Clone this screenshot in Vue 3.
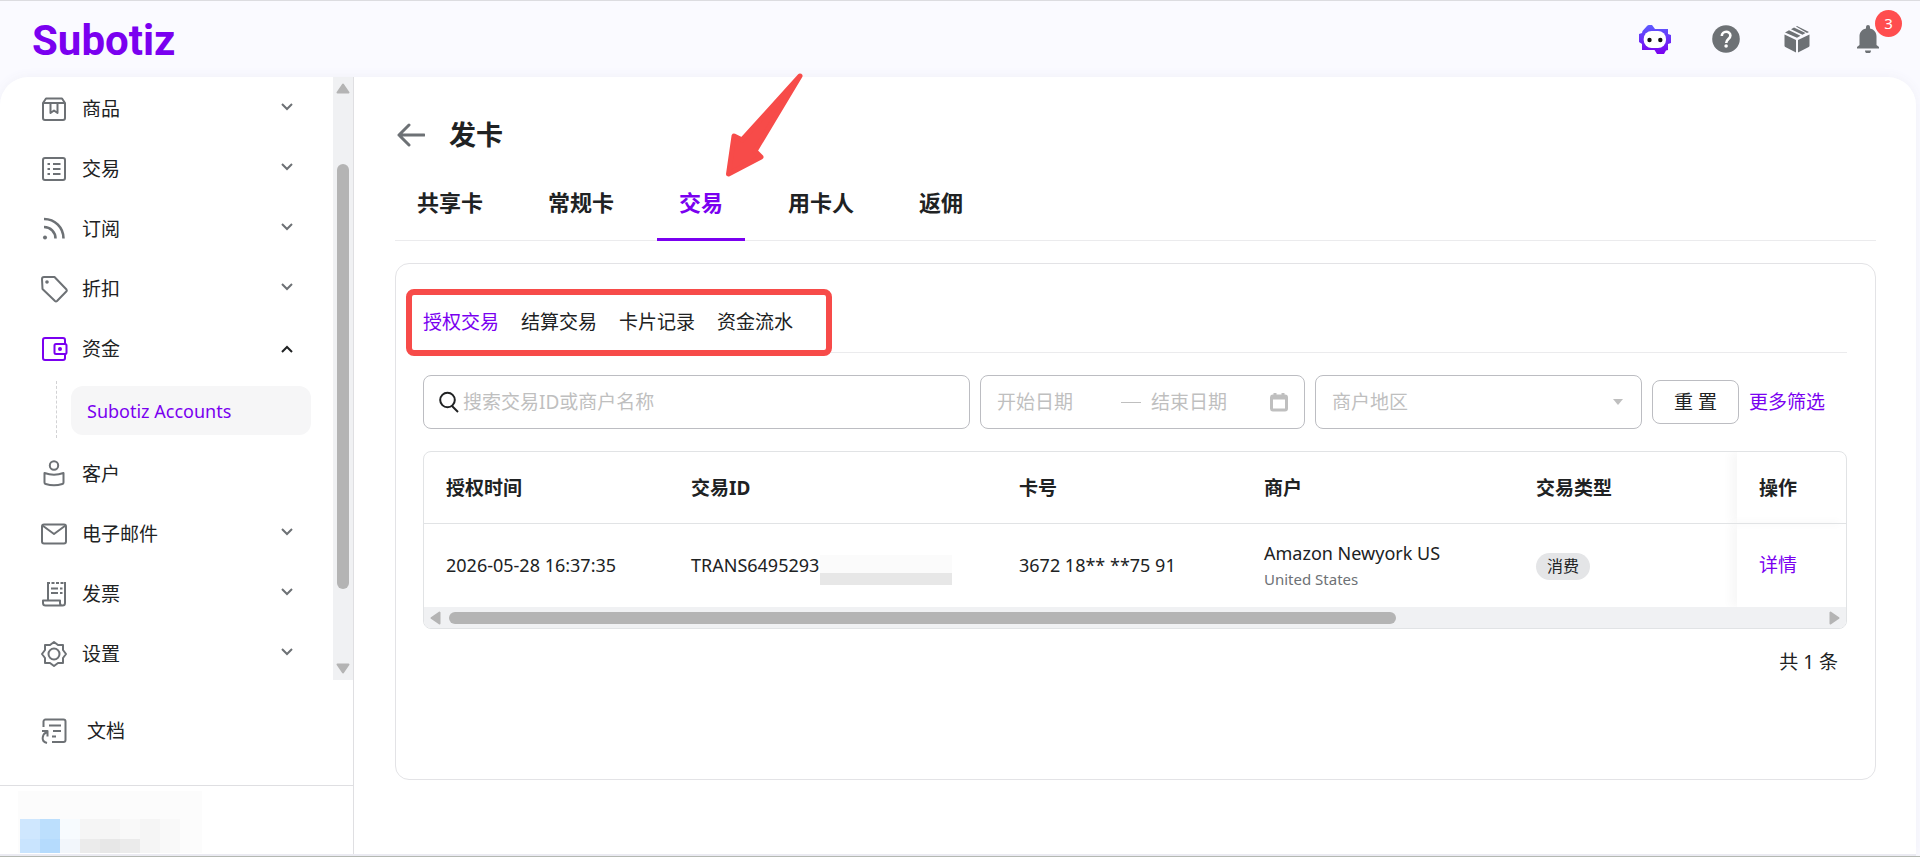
<script setup>
import { ref } from 'vue'

const menuTop = [
  { label: '商品', icon: 'goods', chevron: 'down' },
  { label: '交易', icon: 'trade', chevron: 'down' },
  { label: '订阅', icon: 'feed', chevron: 'down' },
  { label: '折扣', icon: 'tag', chevron: 'down' },
  { label: '资金', icon: 'wallet', chevron: 'up' }
]
const menuBottom = [
  { label: '客户', icon: 'customer', chevron: '' },
  { label: '电子邮件', icon: 'mail', chevron: 'down' },
  { label: '发票', icon: 'invoice', chevron: 'down' },
  { label: '设置', icon: 'gear', chevron: 'down' }
]
const icons = {
  goods: '<path d="M2 7v15a2 2 0 0 0 2 2h18a2 2 0 0 0 2-2V7l-3-4.500H5zM2 7h22"/><path d="M9.500 7v10l3.500-2.500 3.500 2.500V7"/>',
  trade: '<rect x="2" y="2" width="22" height="22" rx="2"/><path d="M12 8h7.500M12 13h7.500M12 18h7.500M6.500 8h2.500M6.500 13h2.500M6.500 18h2.500"/>',
  feed: '<path stroke-width="2.600" d="M3 3c11 0 19.500 8.500 19.500 19.500M3 11c6.500 0 11.500 5 11.500 11.500"/><circle cx="4" cy="21.500" r="2" fill="currentColor" stroke="none"/>',
  tag: '<path d="M1 3a2 2 0 0 1 2-2h10.500L25.500 13.500a1.500 1.500 0 0 1 0 1.800L16 25a1.500 1.500 0 0 1-2 0L1.500 13z"/><circle cx="6" cy="6" r="1.800" fill="currentColor" stroke="none"/>',
  wallet: '<path d="M24 8V4a2 2 0 0 0-2-2H4a2 2 0 0 0-2 2v18a2 2 0 0 0 2 2h18a2 2 0 0 0 2-2v-4"/><rect x="13.500" y="8" width="12" height="10" rx="1.500"/><circle cx="19" cy="13" r="2" fill="currentColor" stroke="none"/>',
  customer: '<circle cx="13" cy="4.500" r="4.200"/><path d="M3.500 12q9.500 3.500 19 0v9.500a1.500 1.500 0 0 1-1.200 1.500q-8.300 2.500-16.600 0a1.500 1.500 0 0 1-1.200-1.500z"/>',
  mail: '<rect x="1" y="3.500" width="24" height="19" rx="2"/><path d="M1.500 4.500L13 13l11.500-8.500"/>',
  invoice: '<path d="M7 19V1M24 1v21a2.500 2.500 0 0 1-2.500 2.500H4.500A2.500 2.500 0 0 1 2 22v-2.500h17V22a2.500 2.500 0 0 0 2.500 2.500"/><path d="M10 7.500h7M10 12h7M19 7.500h2.500M19 12h2.500"/><path d="M6 2h18" stroke-dasharray="3 1.500"/>',
  gear: '<path d="M13 1l4 3h5v5l3 4-3 4v5h-5l-4 3-4-3H4v-5l-3-4 3-4V4h5z"/><circle cx="13" cy="13" r="5.500"/>',
  docs: '<path d="M2.500 9V3.500a2 2 0 0 1 2-2h18a2 2 0 0 1 2 2V22a2 2 0 0 1-2 2H11"/><path d="M8 7.500h12M12 13h8M11 18.500h4"/><path d="M1 13h5.500v5.500M6.500 13.500C2 15.500-1.500 23 6 25"/>'
}
const tabs = ['共享卡', '常规卡', '交易', '用卡人', '返佣']
const subTabs = ['授权交易', '结算交易', '卡片记录', '资金流水']
const tab = ref('交易')
const subTab = ref('授权交易')
const region = ref('')
</script>

<template>
  <div class="page">
    <header class="topbar">
      <a class="logo" href="#">Subotiz</a>
      <div class="tools">
        <button class="tool" aria-label="助手">
          <svg width="32" height="29" viewBox="0 0 32 29">
            <defs>
              <linearGradient id="bot" x1="0" y1="0" x2="0" y2="1">
                <stop offset="0" stop-color="#5c5cff" /><stop offset="1" stop-color="#7a00f0" />
              </linearGradient>
            </defs>
            <path fill="url(#bot)" d="M3.500 6 8 1a3 3 0 0 1 2-1h3l3 4h13v5l3 1v8l-3 1v6l-2 .5-2 3.500h-7L15.500 25H3v-6l-3-2V9l3-1z" />
            <rect x="4.700" y="6" width="22.300" height="17" rx="8" fill="#fff" />
            <circle cx="10.500" cy="15" r="2.200" fill="#111" /><circle cx="21.300" cy="15" r="2.200" fill="#111" />
          </svg>
        </button>
        <button class="tool" aria-label="帮助">
          <svg width="28" height="28" viewBox="0 0 28 28">
            <circle cx="14" cy="14" r="13.800" fill="#6d7175" />
            <path d="M9.800 11c0-5.500 8.600-5.500 8.600-.5 0 3.500-4.200 3.500-4.200 7.500" fill="none" stroke="#fff" stroke-width="2.600" />
            <circle cx="14.100" cy="21" r="1.800" fill="#fff" />
          </svg>
        </button>
        <button class="tool" aria-label="产品">
          <svg width="28" height="28" viewBox="0 0 28 28" fill="#6d7175">
            <path d="M1.500 9.500 13 15v12.500L2.300 22a1.500 1.500 0 0 1-.8-1.300zM26.500 9.500 15 15v12.500L25.700 22a1.500 1.500 0 0 0 .8-1.300z" />
            <path d="M2 7.500 6 5.300l11.500 5.500L14 12.800zM8 4.200l3-1.700 11.500 5.600-3 1.700zM13 1.500 14 1l12 6-2 1z" />
          </svg>
        </button>
        <button class="tool bell" aria-label="通知">
          <svg width="24" height="28" viewBox="0 0 24 28" fill="#6d7175">
            <path d="M10 3.500V2a2 2 0 0 1 4 0v1.500c4.500 1 6.500 4 6.500 8V20l2.500 2v1.500H1V22l2.500-2v-8.500c0-4 2-7 6.500-8zM9 25.500h6a3 3 0 0 1-6 0z" />
          </svg>
          <span class="badge">3</span>
        </button>
      </div>
    </header>

    <div class="panel">
      <aside class="sidebar">
        <div class="scroller">
          <nav class="menu">
            <a v-for="m in menuTop" :key="m.label" href="#" class="item" :class="{ open: m.chevron === 'up' }">
              <svg class="icon" viewBox="0 0 26 26" v-html="icons[m.icon]" />
              <span class="label">{{ m.label }}</span>
              <svg class="chev" viewBox="0 0 12 8"><path :d="m.chevron === 'up' ? 'M1 7l5-5 5 5' : 'M1 1l5 5 5-5'" /></svg>
            </a>
            <div class="children"><a href="#" class="child">Subotiz Accounts</a></div>
            <a v-for="m in menuBottom" :key="m.label" href="#" class="item">
              <svg class="icon" viewBox="0 0 26 26" v-html="icons[m.icon]" />
              <span class="label">{{ m.label }}</span>
              <svg v-if="m.chevron" class="chev" viewBox="0 0 12 8"><path d="M1 1l5 5 5-5" /></svg>
            </a>
          </nav>
          <div class="vbar">
            <svg width="14" height="11" viewBox="0 0 14 11"><path d="M7 1.500 12.500 9.500h-11z" /></svg>
            <div class="vtrack"><div class="vthumb"></div></div>
            <svg width="14" height="11" viewBox="0 0 14 11"><path d="M7 9.500 12.500 1.500h-11z" /></svg>
          </div>
        </div>
        <a href="#" class="item docs">
          <svg class="icon" viewBox="0 0 26 26" v-html="icons.docs" />
          <span class="label">文档</span>
        </a>
        <div class="profile">
          <div class="mosaic">
            <i class="b1"></i><i class="b2"></i><i class="b3"></i><i class="b4"></i><i class="b4"></i><i class="b5"></i><i class="b4"></i><i class="b5"></i><i></i>
            <i class="c1"></i><i class="c2"></i><i class="c3"></i><i class="c4"></i><i class="c5"></i><i class="c4"></i><i class="b4"></i><i class="b5"></i><i></i>
          </div>
        </div>
      </aside>

      <main class="main">
        <div class="title">
          <button class="back" aria-label="返回">
            <svg width="28" height="26" viewBox="0 0 28 26"><path d="M12 3 2 13l10 10M2 13h25" /></svg>
          </button>
          <h1>发卡</h1>
        </div>
        <div class="tabs" role="tablist">
          <button v-for="t in tabs" :key="t" role="tab" :aria-selected="tab === t" :class="{ on: tab === t }" @click="tab = t">{{ t }}</button>
        </div>

        <section class="card">
          <div class="subtabs" role="tablist">
            <button v-for="t in subTabs" :key="t" role="tab" :aria-selected="subTab === t" :class="{ on: subTab === t }" @click="subTab = t">{{ t }}</button>
            <div class="marker"></div>
          </div>

          <div class="filters">
            <label class="field search">
              <svg width="20" height="22" viewBox="0 0 20 22"><circle cx="8.500" cy="9" r="7.300" /><path d="M13 15l6 6" /></svg>
              <input type="text" aria-label="搜索" placeholder="搜索交易ID或商户名称" />
            </label>
            <div class="field dates">
              <input type="text" aria-label="开始日期" placeholder="开始日期" />
              <span class="dash"></span>
              <input type="text" aria-label="结束日期" placeholder="结束日期" />
              <svg width="18" height="20" viewBox="0 0 18 20"><rect x="1.500" y="4" width="15" height="14" rx="1.500" /><path d="M1.500 6h15M5 1v4M13 1v4" /></svg>
            </div>
            <div class="field region">
              <select v-model="region" aria-label="商户地区"><option value="">商户地区</option></select>
              <svg width="10" height="6" viewBox="0 0 10 6"><path d="M0 0h10L5 6z" /></svg>
            </div>
            <button class="reset">重 置</button>
            <a href="#" class="more">更多筛选</a>
          </div>

          <div class="tablebox">
            <table>
              <colgroup>
                <col class="w1" /><col class="w2" /><col class="w1" /><col class="w3" /><col /><col class="w4" />
              </colgroup>
              <thead>
                <tr><th>授权时间</th><th>交易ID</th><th>卡号</th><th>商户</th><th>交易类型</th><th class="fixed">操作</th></tr>
              </thead>
              <tbody>
                <tr>
                  <td>2026-05-28 16:37:35</td>
                  <td><div class="tid">TRANS6495293<span class="mask"></span></div></td>
                  <td>3672 18** **75 91</td>
                  <td>Amazon Newyork US<small>United States</small></td>
                  <td><span class="pill">消费</span></td>
                  <td class="fixed"><a href="#">详情</a></td>
                </tr>
              </tbody>
            </table>
            <div class="hbar">
              <svg width="11" height="14" viewBox="0 0 11 14"><path d="M1.500 7 9.500 1.500v11z" /></svg>
              <div class="htrack"><div class="hthumb"></div></div>
              <svg width="11" height="14" viewBox="0 0 11 14"><path d="M9.500 7 1.500 1.500v11z" /></svg>
            </div>
          </div>
          <div class="total">共 1 条</div>
        </section>
      </main>
    </div>

    <svg class="pointer" width="80" height="110" viewBox="0 0 80 110">
      <path d="M76 4 18 68 10 64 4.500 102 37 85 31 79z" />
    </svg>
  </div>
</template>

<style>
body {
  background: #fafaff;
}
</style>

<style scoped>
.page {
  position: relative;
  display: flex;
  flex-direction: column;
  box-sizing: border-box;
  min-height: 100vh;
  overflow: hidden;
  border-top: 1px solid #dcdce0;
  border-bottom: 1px solid #b4b8b2;
  background: #fafaff;
  color: #202223;
  font: 19px/28px "Noto Sans", "Noto Sans CJK SC", sans-serif;
}
.page * {
  box-sizing: border-box;
}
button, input, select {
  margin: 0;
  padding: 0;
  border: 0;
  background: none;
  color: inherit;
  font: inherit;
}
button {
  cursor: pointer;
}
a {
  color: #7a00f0;
  text-decoration: none;
}
.topbar {
  display: flex;
  align-items: center;
  justify-content: space-between;
  height: 76px;
  padding: 0 38px 0 32px;
}
.logo {
  padding-top: 4px;
  font: 700 42px/48px Roboto, sans-serif;
}
.tools {
  display: flex;
  align-items: center;
  gap: 43px;
}
.tool {
  position: relative;
  display: flex;
  justify-content: center;
  width: 28px;
}
.tool svg {
  flex: none;
}
.badge {
  position: absolute;
  left: 21px;
  top: -15px;
  width: 27px;
  height: 27px;
  border-radius: 14px;
  background: #ff4d4f;
  color: #fff;
  font-size: 15px;
  line-height: 27px;
  text-align: center;
}
.panel {
  flex: 1;
  display: flex;
  margin-right: 4px;
  border-radius: 28px 28px 0 0;
  border-bottom: 2px solid #ebebf2;
  background: #fff;
  overflow: hidden;
  box-shadow: 0 0 12px #f0f0f7;
}
.sidebar {
  display: flex;
  flex-direction: column;
  width: 354px;
  flex: none;
  border-right: 1px solid #dfdfe2;
}
.scroller {
  flex: none;
  display: flex;
  height: 603px;
  overflow: hidden;
}
.menu {
  flex: 1;
  padding-top: 2px;
}
.item {
  display: flex;
  align-items: center;
  height: 60px;
  padding: 0 40px 0 41px;
  color: #202223;
}
.icon {
  width: 26px;
  height: 26px;
  margin-right: 15px;
  overflow: visible;
  fill: none;
  stroke: currentColor;
  stroke-width: 2;
  stroke-linejoin: round;
  color: #6d7175;
}
.open .icon {
  color: #7a00f0;
}
.label {
  flex: 1;
}
.chev {
  width: 12px;
  height: 8px;
  margin-bottom: 4px;
  overflow: visible;
  fill: none;
  stroke: #6d7175;
  stroke-width: 2;
}
.open .chev {
  margin-bottom: 0;
  stroke: #202223;
}
.children {
  margin: 2px 22px 6px 56px;
  padding: 5px 0 3px 14px;
  border-left: 1px dashed #d2d2d4;
}
.child {
  display: block;
  height: 49px;
  padding-left: 16px;
  border-radius: 12px;
  background: #f6f6f7;
  font-size: 18px;
  line-height: 50px;
}
.vbar {
  display: flex;
  flex-direction: column;
  align-items: center;
  width: 20px;
  padding: 6px 0;
  background: #f0f1f3;
}
.vbar svg, .hbar svg {
  flex: none;
  fill: #b4b4b4;
  stroke: #b4b4b4;
  stroke-width: 2;
  stroke-linejoin: round;
}
.vtrack {
  flex: 1;
  padding-top: 70px;
}
.vthumb {
  width: 12px;
  height: 425px;
  border-radius: 6px;
  background: #b4b4b4;
}
.docs {
  height: 105px;
  padding: 0 0 4px 41px;
}
.docs .icon {
  margin-right: 20px;
}
.profile {
  flex: 1;
  padding: 5px 18px 0;
  border-top: 1px solid #dfdfe2;
}
.mosaic {
  display: grid;
  grid-template-columns: repeat(9, 20px);
  grid-template-rows: 20px 14px;
  width: 184px;
  padding: 28px 2px 0;
  background: #fcfcfc;
}
.b1 { background: #cfe7fe; }
.b2 { background: #bcdffd; }
.b3 { background: #f7fbfe; }
.b4 { background: #f5f5f5; }
.b5 { background: #f9f9f9; }
.c1 { background: #c9e4fe; }
.c2 { background: #b5dbfd; }
.c3 { background: #f2f6fb; }
.c4 { background: #ebebeb; }
.c5 { background: #e7e7e7; }
.main {
  flex: 1;
  min-width: 0;
  padding: 38px 40px 0 41px;
}
.title {
  display: flex;
  align-items: center;
  gap: 24px;
  height: 40px;
  padding-left: 2px;
}
.back {
  display: flex;
}
.back svg {
  fill: none;
  stroke: #6d7175;
  stroke-width: 3;
  stroke-linecap: round;
  stroke-linejoin: round;
}
h1 {
  margin: 0;
  font-size: 27px;
  line-height: 40px;
  font-weight: 700;
}
.tabs {
  display: flex;
  gap: 21px;
  height: 86px;
  border-bottom: 1px solid #ebebed;
}
.tabs button {
  height: 86px;
  padding: 22px 22px 12px;
  border-bottom: 3px solid transparent;
  font-size: 22px;
  line-height: 32px;
  font-weight: 700;
}
.tabs .on {
  border-color: #7a00f0;
  color: #7a00f0;
}
.card {
  height: 517px;
  margin-top: 22px;
  padding: 26px 28px 0 27px;
  border: 1px solid #e3e3e6;
  border-radius: 14px;
}
.subtabs {
  position: relative;
  display: flex;
  gap: 22px;
  height: 63px;
  padding-top: 2px;
  border-bottom: 1px solid #ebebed;
}
.subtabs .on {
  color: #7a00f0;
}
.marker {
  position: absolute;
  left: -17px;
  top: -1px;
  width: 426px;
  height: 67px;
  border: 6px solid #f74b49;
  border-radius: 8px;
  pointer-events: none;
}
.filters {
  display: flex;
  align-items: center;
  gap: 10px;
  margin-top: 22px;
}
.field {
  display: flex;
  align-items: center;
  height: 54px;
  padding: 0 16px;
  border: 1px solid #bcbdc2;
  border-radius: 8px;
}
.field input {
  min-width: 0;
  outline: none;
}
.field input::placeholder {
  color: #bfbfbf;
  opacity: 1;
}
.search {
  flex: 1;
  gap: 4px;
  padding: 0 15px;
}
.search svg {
  flex: none;
  fill: none;
  stroke: #202223;
  stroke-width: 2;
}
.search input {
  flex: 1;
}
.dates {
  width: 325px;
}
.dates input {
  width: 114px;
}
.dash {
  width: 20px;
  height: 1px;
  margin: 0 10px;
  background: #bfbfbf;
}
.dates svg {
  flex: none;
  margin-left: auto;
  fill: none;
  stroke: #bfbfbf;
  stroke-width: 3;
}
.region {
  position: relative;
  width: 327px;
  padding: 0;
}
.region select {
  appearance: none;
  width: 100%;
  height: 100%;
  padding: 0 16px;
  color: #bfbfbf;
}
.region svg {
  position: absolute;
  right: 18px;
  fill: #bfbfbf;
  pointer-events: none;
}
.reset {
  width: 87px;
  height: 44px;
  border: 1px solid #bcbdc2;
  border-radius: 8px;
}
.more {
  margin-right: 22px;
}
.tablebox {
  margin-top: 22px;
  border: 1px solid #e1e3e5;
  border-radius: 8px;
  overflow: hidden;
}
table {
  width: 100%;
  table-layout: fixed;
  border-collapse: collapse;
}
.w1 { width: 245px; }
.w2 { width: 328px; }
.w3 { width: 272px; }
.w4 { width: 109px; }
th {
  height: 71px;
  padding: 1px 22px 0;
  border-bottom: 1px solid #e1e3e5;
  text-align: left;
  font-weight: 700;
}
td {
  height: 84px;
  padding: 0 22px;
  font-size: 18px;
}
td small {
  display: block;
  color: #6d7175;
  font-size: 15px;
  line-height: 24px;
}
td a {
  font-size: 19px;
}
.fixed {
  box-shadow: -6px 0 10px #f7f7f7;
}
.tid {
  position: relative;
  white-space: nowrap;
}
.mask {
  position: absolute;
  left: 129px;
  top: 4px;
  width: 132px;
  height: 30px;
  border-bottom: 12px solid #e7e7e7;
  background: #fbfbfb;
}
.pill {
  display: inline-block;
  height: 27px;
  padding: 0 11px;
  border-radius: 14px;
  background: #e4e5e7;
  font-size: 16px;
  line-height: 27px;
}
.hbar {
  display: flex;
  align-items: center;
  height: 21px;
  padding: 0 6px;
  background: #f0f1f3;
}
.htrack {
  flex: 1;
  padding: 0 8px;
}
.hthumb {
  width: 69%;
  height: 12px;
  border-radius: 6px;
  background: #b4b4b4;
}
.total {
  margin: 19px 9px 0;
  text-align: right;
}
.pointer {
  position: absolute;
  left: 724px;
  top: 71px;
  fill: #f74b49;
  stroke: #f74b49;
  stroke-width: 5;
  stroke-linejoin: round;
}
</style>
